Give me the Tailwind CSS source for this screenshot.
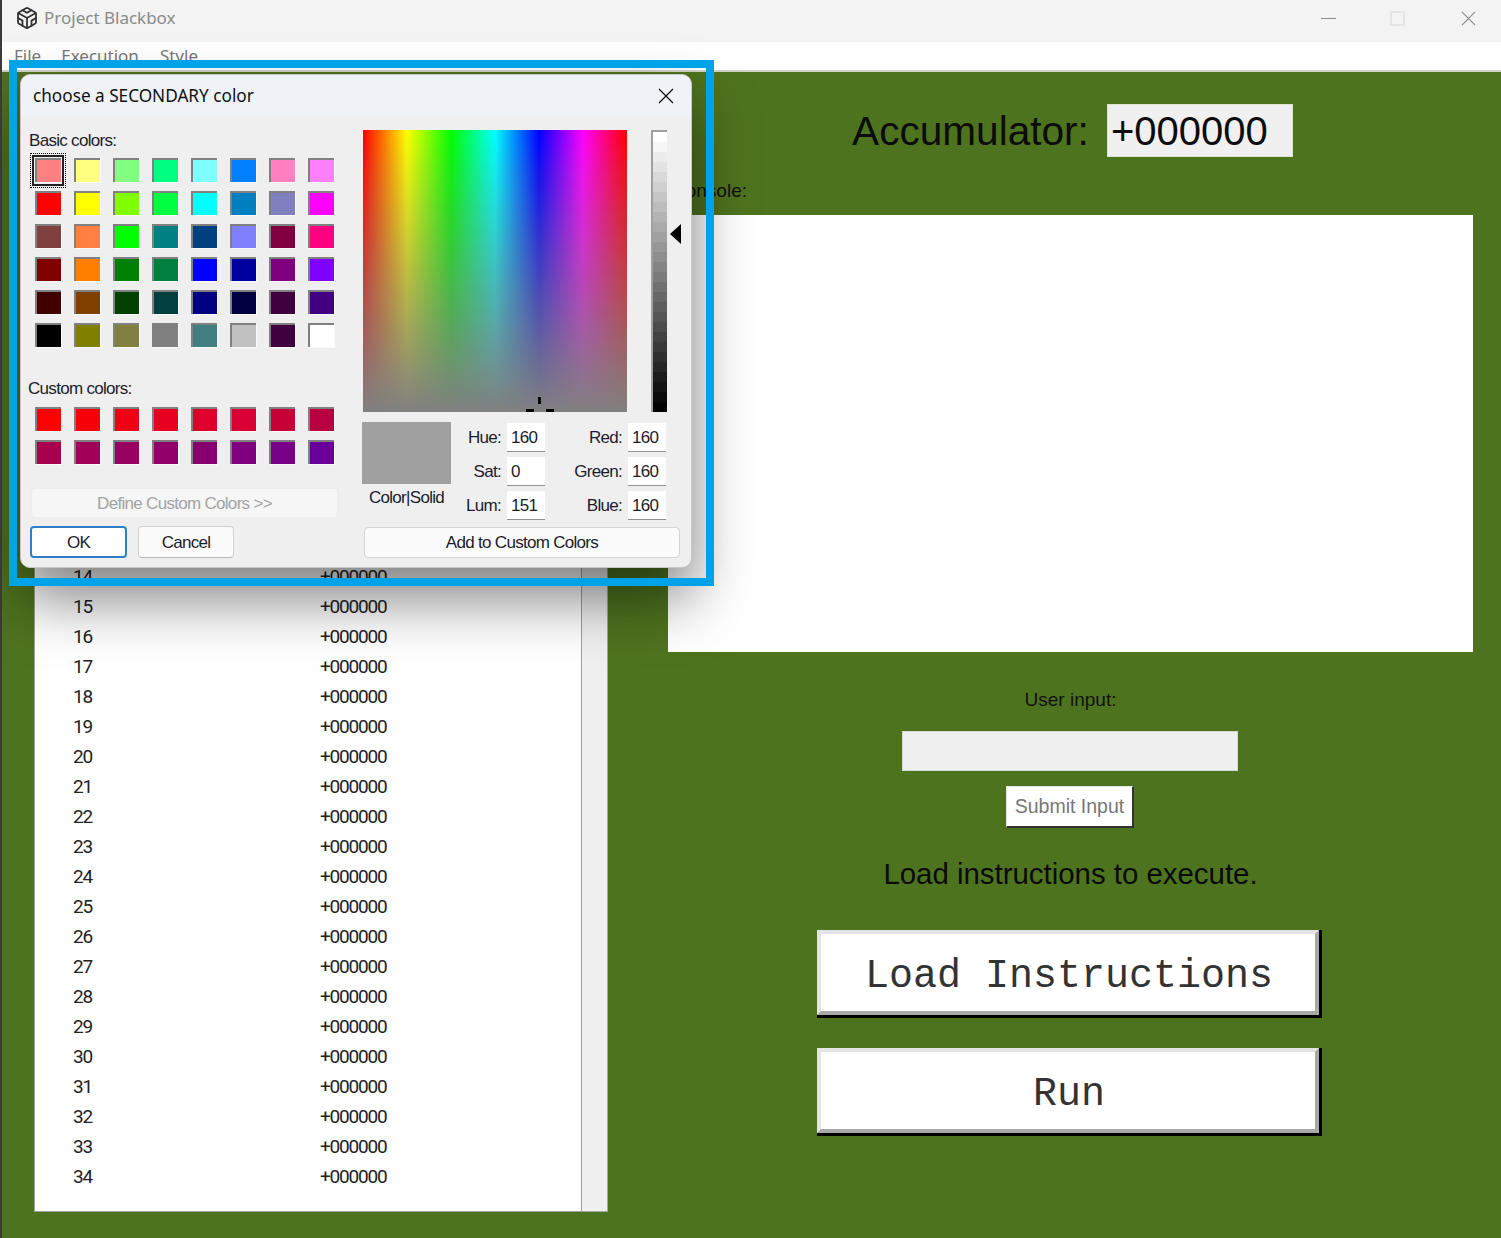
<!DOCTYPE html>
<html lang="en">

<head>
    <meta charset="UTF-8">
    <title>Project Blackbox</title>
    <script src="https://cdn.jsdelivr.net/npm/@tailwindcss/browser@4"></script>
</head>

<body class="bg-white">
    <div class="relative w-[1501px] h-[1238px] overflow-hidden flex flex-col border-l-2 border-[#3a3a3a] font-['Liberation_Sans',sans-serif]">

        <!-- title bar -->
        <div class="h-[42px] bg-[#f3f3f3] flex items-center pb-[6px] shrink-0">
            <svg class="ml-[13px] w-[24px] h-[24px] text-[#333]" viewBox="0 0 24 24" fill="none" stroke="currentColor" stroke-width="1.8" stroke-linecap="round" stroke-linejoin="round">
                <path d="M21 16V8a2 2 0 0 0-1-1.73l-7-4a2 2 0 0 0-2 0l-7 4A2 2 0 0 0 3 8v8a2 2 0 0 0 1 1.73l7 4a2 2 0 0 0 2 0l7-4A2 2 0 0 0 21 16z" />
                <polyline points="7.5 4.21 12 6.81 16.5 4.21" />
                <polyline points="7.5 19.79 7.5 14.6 3 12" />
                <polyline points="21 12 16.5 14.6 16.5 19.79" />
                <polyline points="3.27 6.96 12 12.01 20.73 6.96" />
                <line x1="12" y1="22.08" x2="12" y2="12" />
            </svg>
            <span class="ml-[5px] text-[17px] text-[#8a8a8a] font-['Noto_Sans',sans-serif]">Project Blackbox</span>
            <div class="ml-auto flex items-center mr-[25px]">
                <div class="w-[15px] h-[1px] bg-[#8a8a8a]"></div>
                <div class="ml-[54px] w-[15px] h-[15px] border-2 border-[#e4e4e4] rounded-[2px]"></div>
                <svg class="ml-[56px] w-[15px] h-[15px] text-[#8a8a8a]" viewBox="0 0 16 16" fill="none" stroke="currentColor" stroke-width="1.2">
                    <path d="M1 1l14 14M15 1L1 15" />
                </svg>
            </div>
        </div>

        <!-- menu bar -->
        <div class="h-[30px] bg-white shrink-0 flex items-start pt-[1px] border-b-2 border-[#d0d2c8] text-[17px] text-[#777] font-['Noto_Sans',sans-serif]">
            <span class="ml-[12px]">File</span>
            <span class="ml-[20px]">Execution</span>
            <span class="ml-[21px]">Style</span>
        </div>

        <!-- main -->
        <div class="flex-1 bg-[#4e731e] flex">
            <div class="ml-[32px] mt-[470px] mb-[26px] flex">
                <div id="memory-list" class="w-[548px] bg-white border border-[#a0a0a0] pt-[19px] text-[#222] text-[19px] tracking-[-1.2px] font-['Roboto',sans-serif]"></div>
                <div class="w-[26px] bg-[#f0f0f0] border-b border-r border-[#a0a8a0]"></div>
            </div>

            <div class="ml-[60px] w-[805px] flex flex-col">
                <div class="mt-[32px] h-[53px] flex items-center justify-center ml-[4px] text-[40.6px] text-[#0c0c0c]">
                    <span class="pt-[2px]">Accumulator:</span>
                    <div class="ml-[18px] w-[186px] h-[53px] bg-[#f0f0f0] border border-[#dfe3d8] pl-[3px] pt-[1px] flex items-center text-[40px]">+000000</div>
                </div>
                <div class="mt-[24px] h-[20px] pl-[4px] text-[19px] leading-[20px] text-[#111]">Console:</div>
                <div class="mt-[14px] h-[437px] bg-white"></div>

                <div class="mt-[37px] text-center text-[19px] leading-[22px] text-[#111]">User input:</div>
                <div class="mt-[20px] ml-[234px] w-[336px] h-[40px] bg-[#f0f0f0] border border-[#d8d8d8]"></div>
                <div class="mt-[15px] ml-[338px] w-[128px] h-[42px] bg-white border border-[#e4e4e4] border-r-2 border-b-2 border-r-[#333] border-b-[#333] flex items-center justify-center text-[19.5px] text-[#777]">Submit Input</div>
                <div class="mt-[27px] text-center text-[29.4px] leading-[38px] text-[#0a0a0a]">Load instructions to execute.</div>
                <div class="mt-[37px] ml-[149px] w-[505px] h-[88px] bg-[#a8a8a8] border-r-[3px] border-b-[3px] border-black">
                    <div class="h-full pt-[8px] pl-[2px] bg-white border-t-4 border-l-4 border-r-4 border-b-4 border-t-[#e4e4e4] border-l-[#e4e4e4] border-r-[#a8a8a8] border-b-[#a8a8a8] flex items-center justify-center text-[40px] text-[#333] font-['Liberation_Mono',monospace]">Load Instructions</div>
                </div>
                <div class="mt-[30px] ml-[149px] w-[505px] h-[88px] bg-[#a8a8a8] border-r-[3px] border-b-[3px] border-black">
                    <div class="h-full pt-[8px] pl-[2px] bg-white border-t-4 border-l-4 border-r-4 border-b-4 border-t-[#e4e4e4] border-l-[#e4e4e4] border-r-[#a8a8a8] border-b-[#a8a8a8] flex items-center justify-center text-[40px] text-[#333] font-['Liberation_Mono',monospace]">Run</div>
                </div>
            </div>
        </div>

        <!-- annotation frame -->
        <div class="absolute left-[7px] top-[60px] w-[705px] h-[526px] border-8 border-[#00a2e8] z-20"></div>

        <!-- colour dialog -->
        <div class="absolute left-[18px] top-[74px] w-[672px] h-[494px] z-10 rounded-[10px] bg-[#efefef] border border-[#c8c8c8] shadow-[0_30px_60px_rgba(0,0,0,0.5)] text-[17px] tracking-[-0.7px] text-[#1c1c2c]">
            <div class="h-[42px] rounded-t-[10px] bg-[#eff3f8] flex items-center justify-between pl-[12px] pr-[17px]">
                <span class="text-[17.2px] tracking-normal text-[#111] font-['Noto_Sans',sans-serif]">choose a SECONDARY color</span>
                <svg class="w-[16px] h-[16px] text-[#111]" viewBox="0 0 16 16" fill="none" stroke="currentColor" stroke-width="1.3">
                    <path d="M1 1l14 14M15 1L1 15" />
                </svg>
            </div>

            <div class="flex pt-[13px]">
                <div class="w-[342px] shrink-0">
                    <div class="h-[20px] leading-[22px] pl-[8px]">Basic colors:</div>
                    <div id="basic-colors" class="mt-[8px] ml-[14px] grid grid-cols-[repeat(8,26px)] auto-rows-[24px] gap-x-[13px] gap-y-[9px]"></div>
                    <div class="mt-[31px] h-[20px] leading-[22px] pl-[7px]">Custom colors:</div>
                    <div id="custom-colors" class="mt-[9px] ml-[14px] grid grid-cols-[repeat(8,26px)] auto-rows-[24px] gap-x-[13px] gap-y-[9px]"></div>
                    <div class="mt-[24px] ml-[10px] w-[307px] h-[30px] pt-[1px] rounded-[4px] bg-[#f6f6f6] border border-[#ececec] flex items-center justify-center text-[#a3a3a3]">Define Custom Colors &gt;&gt;</div>
                    <div class="mt-[8px] ml-[9px] flex gap-[11px]">
                        <div class="w-[97px] h-[32px] pt-[1px] rounded-[4px] bg-white border-2 border-[#2f7fc8] flex items-center justify-center">OK</div>
                        <div class="w-[96px] h-[32px] pt-[1px] rounded-[4px] bg-[#fbfbfb] border border-[#d0d0d0] border-b-[#b8b8b8] flex items-center justify-center">Cancel</div>
                    </div>
                </div>

                <div class="w-[320px] shrink-0">
                    <div class="flex">
                        <div class="relative w-[264px] h-[282px] overflow-hidden bg-[linear-gradient(to_right,#ff0000,#ffff00,#00ff00,#00ffff,#0000ff,#ff00ff,#ff0000)]">
                            <div class="absolute inset-0 bg-[linear-gradient(to_bottom,rgba(128,128,128,0),#808080)]"></div>
                            <div class="absolute left-[175px] top-[267px] w-[3px] h-[7px] bg-black"></div>
                            <div class="absolute left-[163px] top-[279px] w-[8px] h-[3px] bg-black"></div>
                            <div class="absolute left-[183px] top-[279px] w-[8px] h-[3px] bg-black"></div>
                        </div>
                        <div id="lum-bar" class="ml-[24px] w-[16px] h-[282px] flex flex-col border-l-2 border-t-2 border-[#a0a0a0]"></div>
                        <svg class="ml-[3px] mt-[94px] w-[11px] h-[20px]" viewBox="0 0 11 20">
                            <path d="M11 0v20L0 10z" fill="#000" />
                        </svg>
                    </div>

                    <div class="mt-[10px] flex">
                        <div class="w-[89px] -ml-[1px] shrink-0">
                            <div class="h-[62px] bg-[#a0a0a0]"></div>
                            <div class="mt-[4px] text-center leading-[20px]">Color|Solid</div>
                        </div>
                        <div class="pt-[1px] grid grid-cols-[50px_44px_77px_44px] auto-rows-[29px] gap-y-[5px] items-center">
                            <div class="text-right">Hue:</div>
                            <div class="ml-[6px] w-[38px] h-[29px] bg-white border-b border-[#8f8f8f] pl-[4px] leading-[30px]">160</div>
                            <div class="text-right">Red:</div>
                            <div class="ml-[6px] w-[38px] h-[29px] bg-white border-b border-[#8f8f8f] pl-[4px] leading-[30px]">160</div>
                            <div class="text-right">Sat:</div>
                            <div class="ml-[6px] w-[38px] h-[29px] bg-white border-b border-[#8f8f8f] pl-[4px] leading-[30px]">0</div>
                            <div class="text-right">Green:</div>
                            <div class="ml-[6px] w-[38px] h-[29px] bg-white border-b border-[#8f8f8f] pl-[4px] leading-[30px]">160</div>
                            <div class="text-right">Lum:</div>
                            <div class="ml-[6px] w-[38px] h-[29px] bg-white border-b border-[#8f8f8f] pl-[4px] leading-[30px]">151</div>
                            <div class="text-right">Blue:</div>
                            <div class="ml-[6px] w-[38px] h-[29px] bg-white border-b border-[#8f8f8f] pl-[4px] leading-[30px]">160</div>
                        </div>
                    </div>

                    <div class="mt-[7px] ml-[1px] w-[316px] h-[31px] rounded-[4px] bg-[#fbfbfb] border border-[#d4d4d4] flex items-center justify-center">Add to Custom Colors</div>
                </div>
            </div>
        </div>
    </div>

    <script>
        const basicColors = [
            '#ff8080', '#ffff80', '#80ff80', '#00ff80', '#80ffff', '#0080ff', '#ff80c0', '#ff80ff',
            '#ff0000', '#ffff00', '#80ff00', '#00ff40', '#00ffff', '#0080c0', '#8080c0', '#ff00ff',
            '#804040', '#ff8040', '#00ff00', '#008080', '#004080', '#8080ff', '#800040', '#ff0080',
            '#800000', '#ff8000', '#008000', '#008040', '#0000ff', '#0000a0', '#800080', '#8000ff',
            '#400000', '#804000', '#004000', '#004040', '#000080', '#000040', '#400040', '#400080',
            '#000000', '#808000', '#808040', '#808080', '#408080', '#c0c0c0', '#400040', '#ffffff'
        ];
        const customColors = [
            '#ff0000', '#f80008', '#f00014', '#e80020', '#e0002c', '#d80034', '#c80038', '#b80040',
            '#a8004c', '#a00058', '#980060', '#900068', '#880070', '#800080', '#780088', '#680098'
        ];

        function fillSwatches(id, colors) {
            document.getElementById(id).innerHTML = colors.map((color, i) => {
                const selected = id === 'basic-colors' && i === 0;
                return `<div class="relative w-[26px] h-[24px] border-2 border-[#808080] border-r-0 border-b-0 shadow-[1px_1px_0_#fafafa]" style="background:${color}">
                    ${selected ? '<div class="absolute -left-[7px] -top-[7px] w-[36px] h-[35px] border border-dotted border-black"></div><div class="absolute -left-[5px] -top-[5px] w-[32px] h-[31px] border-2 border-[#222]"></div>' : ''}
                </div>`;
            }).join('');
        }
        fillSwatches('basic-colors', basicColors);
        fillSwatches('custom-colors', customColors);

        // luminosity bar, drawn in bands like the native control
        const bands = 28;
        let lumHtml = '';
        for (let i = 0; i < bands; i++) {
            const v = Math.round(255 - (255 * i) / (bands - 1));
            lumHtml += `<div class="flex-1" style="background:rgb(${v},${v},${v})"></div>`;
        }
        document.getElementById('lum-bar').innerHTML = lumHtml;

        // memory rows, the ones above 14 sit behind the dialog
        let rows = '';
        for (let i = 14; i <= 34; i++) {
            rows += `<div class="h-[30px] flex items-center pl-[38px]"><span class="w-[247px]">${i}</span><span>+000000</span></div>`;
        }
        document.getElementById('memory-list').innerHTML = rows;
    </script>
</body>

</html>
